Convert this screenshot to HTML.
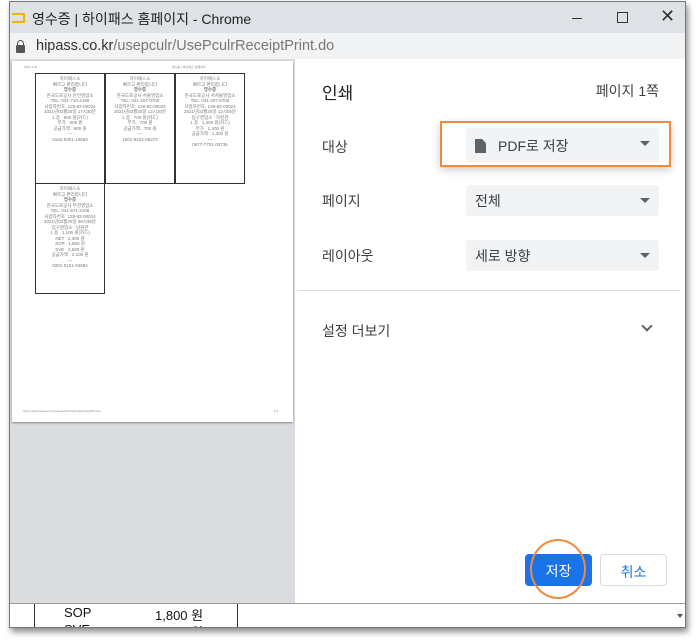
<!DOCTYPE html>
<html><head><meta charset="utf-8"><style>
*{margin:0;padding:0;box-sizing:border-box}
body{width:698px;height:640px;background:#fff;position:relative;overflow:hidden;font-family:"Liberation Sans","Noto Sans CJK KR",sans-serif;}
.win{position:absolute;left:9px;top:1px;width:677px;height:627px;border:1px solid #777;background:#fff;box-shadow:2px 4px 6px rgba(0,0,0,.45);}
.title{position:absolute;left:0;top:0;width:100%;height:31px;background:#dee1e6;}
.title .t{position:absolute;left:22px;top:7px;font-size:14px;color:#222;}
.title .ic{position:absolute;left:2px;top:11px;width:13px;height:10px;border:2px solid #f0b400;border-left:none;}
.addr{position:absolute;left:0;top:31px;width:100%;height:26px;background:#f1f3f4;}
.addr .u{position:absolute;left:26px;top:5px;font-size:14.5px;color:#333;}
.addr .u span{color:#777}
.lock{position:absolute;left:6px;top:12px;width:9px;height:8px;background:#555;border-radius:1px}
.lock:before{content:"";position:absolute;left:1px;top:-5px;width:7px;height:6px;border:1.5px solid #555;border-bottom:none;border-radius:4px 4px 0 0;box-sizing:border-box}
.prev{position:absolute;left:0;top:57px;width:285px;height:544px;background:#dadce0;}
.page{position:absolute;left:2px;top:2px;width:281px;height:361px;background:#fff;box-shadow:0 1px 2px rgba(0,0,0,.4);}
.rc{position:absolute;border:1px solid #333;width:70px;height:111px;font-size:4.5px;line-height:5.5px;color:#777;text-align:center;padding-top:2px;overflow:hidden}
.right{position:absolute;left:285px;top:57px;width:390px;height:544px;background:#fff;}
.lbl{position:absolute;left:27px;font-size:14px;color:#3c4043;}
.sel{position:absolute;left:171px;width:193px;height:31px;background:#f1f3f4;border-radius:3px;font-size:14px;color:#3c4043;padding:6px 0 0 9px}
.sel:after{content:"";position:absolute;right:9px;top:13px;border:5px solid transparent;border-top:5px solid #5f6368;}
.bottom{position:absolute;left:0;top:601px;width:100%;height:24px;background:#fff;border-top:1px solid #999;overflow:hidden}
.btn{position:absolute;top:495px;height:32px;border-radius:4px;font-size:14px;text-align:center;padding-top:7px}
</style></head><body>
<div class="win">
 <div class="title"><div class="ic"></div><div class="t">영수증 | 하이패스 홈페이지 - Chrome</div>
  <div style="position:absolute;left:562px;top:16px;width:10px;height:1px;background:#333"></div>
  <div style="position:absolute;left:607px;top:10px;width:11px;height:11px;border:1px solid #333"></div>
  <div style="position:absolute;left:650px;top:4px;font-size:18px;color:#333">✕</div>
 </div>
 <div class="addr"><div class="lock"></div><div class="u">hipass.co.kr<span>/usepculr/UsePculrReceiptPrint.do</span></div></div>
 <div class="prev"><div class="page">
  <div style="position:absolute;left:12px;top:4px;font-size:3px;color:#888">2021.3.21</div>
  <div style="position:absolute;left:160px;top:4px;font-size:3px;color:#888">영수증 | 하이패스 홈페이지</div>
  <div class="rc" style="left:23px;top:12px">하이패스소<br>빠르고 편리합니다<br><b>영수증</b><br>한국도로공사 안전영업소<br>TEL: 031-710-2186<br>사업자번호: 128-82-00024<br>2021년03월20일 17시30분<br>1 종 &nbsp; 900 원(카드)<br>부가 &nbsp; 800 원<br>공급가액 : 900 원<br>---<br>0162-8301-16663</div>
  <div class="rc" style="left:93px;top:12px">하이패스소<br>빠르고 편리합니다<br><b>영수증</b><br>한국도로공사 서울영업소<br>TEL: 031-207-0700<br>사업자번호: 128-82-00024<br>2021년03월20일 12시10분<br>1 종 &nbsp; 700 원(카드)<br>부가 &nbsp; 700 원<br>공급가액 : 700 원<br>---<br>1601-8102-06373</div>
  <div class="rc" style="left:163px;top:12px">하이패스소<br>빠르고 편리합니다<br><b>영수증</b><br>한국도로공사 서서울영업소<br>TEL: 031-207-0700<br>사업자번호: 128-82-00024<br>2021년03월20일 12시05분<br>입구영업소 : 목련관<br>1 종 &nbsp; 1,400 원(카드)<br>부가 &nbsp; 1,400 원<br>공급가액 : 1,400 원<br>---<br>0677-7701-00736</div>
  <div class="rc" style="left:23px;top:122px">하이패스소<br>빠르고 편리합니다<br><b>영수증</b><br>한국도로공사 부천영업소<br>TEL: 031-671-2106<br>사업자번호: 128-82-00024<br>2021년03월20일 08시35분<br>입구영업소 : 남원관<br>1 종 &nbsp; 1,100 원(카드)<br>NET &nbsp; 2,300 원<br>SOP &nbsp; 1,800 원<br>SVE &nbsp; 2,600 원<br>공급가액 : 2,100 원<br>---<br>0201-0101-04884</div>
  <div style="position:absolute;left:11px;top:348px;font-size:3px;color:#888">https://www.hipass.co.kr/usepculr/UsePculrReceiptPrint.do</div>
  <div style="position:absolute;left:262px;top:348px;font-size:3px;color:#888">1/1</div>
 </div></div>
 <div class="right">
  <div class="lbl" style="top:20px;font-size:17px;color:#202124">인쇄</div>
  <div style="position:absolute;right:26px;top:22px;font-size:14px;color:#3c4043">페이지 1쪽</div>
  <div class="lbl" style="top:78px">대상</div>
  <div class="sel" style="top:69px;height:34px;padding-top:8px"><span style="display:inline-block;width:11px;height:14px;background:#5f6368;vertical-align:-2px;margin-right:12px;clip-path:polygon(0 0,65% 0,100% 30%,100% 100%,0 100%)"></span>PDF로 저장</div>
  <div style="position:absolute;left:145px;top:62px;width:231px;height:46px;border:2px solid #ef8a3e;box-shadow:0 3px 8px rgba(0,0,0,.2)"></div>
  <div class="lbl" style="top:132px">페이지</div>
  <div class="sel" style="top:126px">전체</div>
  <div class="lbl" style="top:187px">레이아웃</div>
  <div class="sel" style="top:181px">세로 방향</div>
  <div style="position:absolute;left:2px;top:231px;width:383px;height:1px;background:#dadce0"></div>
  <div class="lbl" style="top:262px">설정 더보기</div>
  <div style="position:absolute;left:348px;top:263px;width:8px;height:8px;border-right:2px solid #5f6368;border-bottom:2px solid #5f6368;transform:rotate(45deg)"></div>
  <div class="btn" style="left:230px;width:67px;background:#1a73e8;color:#fff">저장</div>
  <div class="btn" style="left:305px;width:67px;border:1px solid #dadce0;color:#1a73e8">취소</div>
  <div style="position:absolute;left:235px;top:480px;width:56px;height:60px;border:2px solid #ef8a3e;border-radius:50%"></div>
 </div>
 <div class="bottom">
  <div style="position:absolute;left:24px;top:-1px;width:1px;height:25px;background:#333"></div>
  <div style="position:absolute;left:227px;top:-1px;width:1px;height:25px;background:#333"></div>
  <div style="position:absolute;left:54px;top:1px;font-size:13px;color:#111">SOP</div>
  <div style="position:absolute;left:145px;top:1px;font-size:13px;color:#111">1,800 원</div>
  <div style="position:absolute;left:54px;top:18px;font-size:13px;color:#111">SVE</div>
  <div style="position:absolute;left:145px;top:18px;font-size:13px;color:#111">2,600 원</div>
  <div style="position:absolute;right:2px;top:10px;border:3px solid transparent;border-top:4px solid #555"></div>
 </div>
</div>
</body></html>
